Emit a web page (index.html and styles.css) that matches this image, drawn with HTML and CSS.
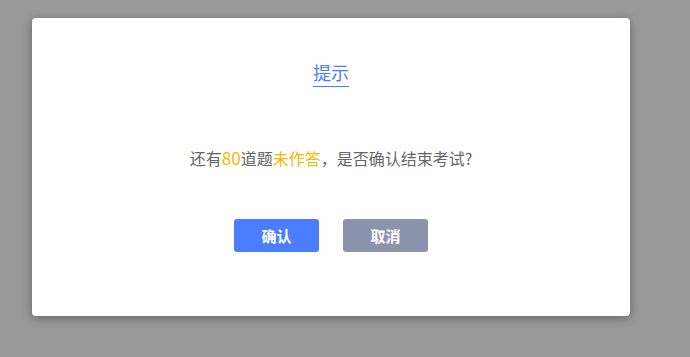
FILE: index.html
```html
<!DOCTYPE html>
<html lang="zh-CN">
<head>
  <meta charset="UTF-8">
  <meta name="viewport" content="width=device-width, initial-scale=1.0">
  <title>提示</title>
  <link rel="stylesheet" href="styles.css">
</head>
<body>
  <div class="dialog">
    <div class="dialog-title"><span>提示</span></div>
    <p class="dialog-msg">还有<span class="warn num">80</span>道题<span class="warn">未作答</span>，是否确认结束考试?</p>
    <div class="dialog-btns">
      <button class="btn btn-ok">确认</button>
      <button class="btn btn-cancel">取消</button>
    </div>
  </div>
</body>
</html>
```

FILE: styles.css
```css
body {
  margin: 0;
  padding: 18px 32px;
  background: #999999;
  font-family: "Noto Sans CJK SC", "Noto Sans", sans-serif;
  height: 357px;
  box-sizing: border-box;
}
.dialog {
  width: 598px;
  height: 298px;
  box-sizing: border-box;
  background: #fff;
  border-radius: 4px;
  box-shadow: 0 2px 10px rgba(0, 0, 0, 0.35);
  padding-top: 42px;
  text-align: center;
}
.dialog-title span {
  display: inline-block;
  font-size: 18px;
  line-height: 24px;
  color: #4a7dff;
  padding-bottom: 2px;
  border-bottom: 1px solid #4a7dff;
}
.dialog-msg {
  margin: 60px 0 0;
  font-size: 16px;
  line-height: 22px;
  color: #666;
}
.warn {
  color: #f7b500;
}
.num {
  font-size: 17px;
}
.dialog-btns {
  margin-top: 50px;
  display: flex;
  justify-content: center;
  gap: 24px;
}
.btn {
  width: 85px;
  height: 33px;
  border: none;
  border-radius: 3px;
  color: #fff;
  font-family: inherit;
  font-size: 15px;
  font-weight: bold;
  cursor: pointer;
}
.btn-ok {
  background: #4a7dff;
}
.btn-cancel {
  background: #8c93ad;
}
```
